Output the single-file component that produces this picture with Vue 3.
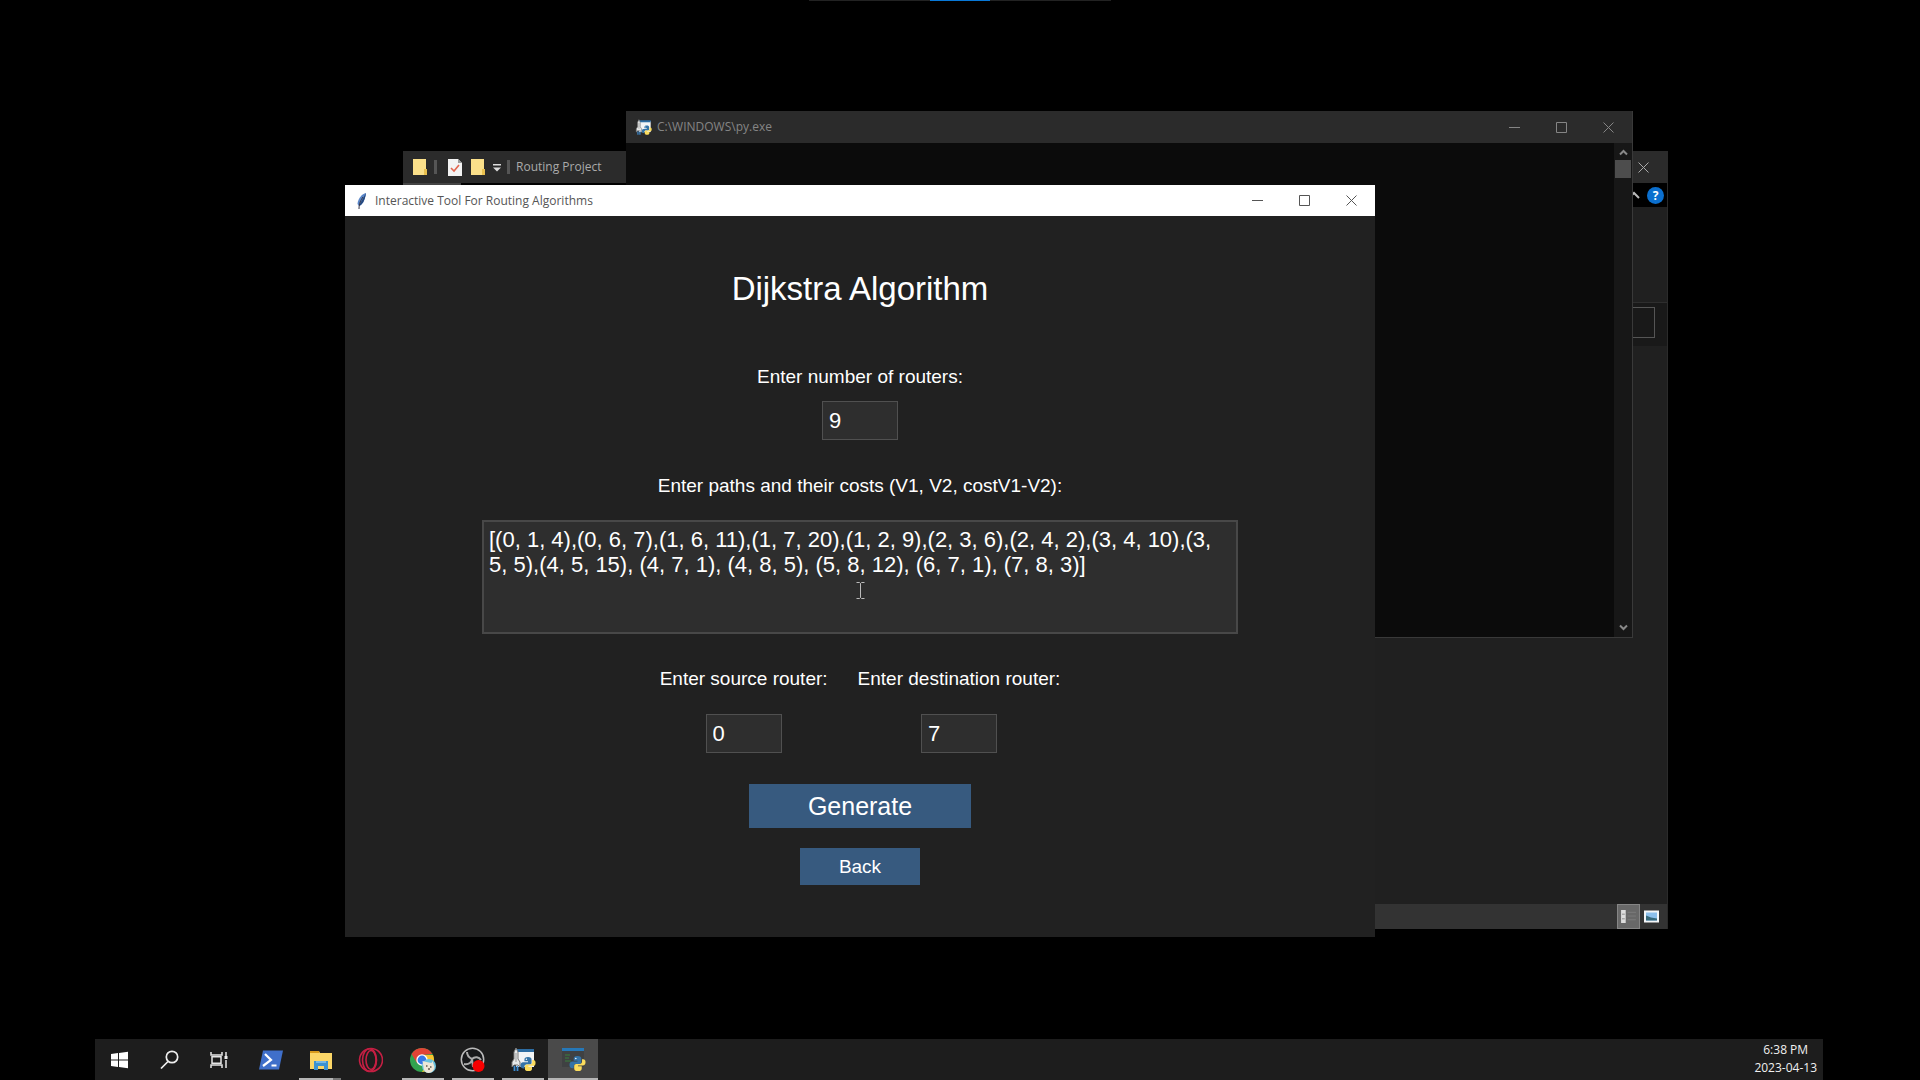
<script setup>
import { ref } from 'vue'

const routers = ref('9')
const paths = ref(
  '[(0, 1, 4),(0, 6, 7),(1, 6, 11),(1, 7, 20),(1, 2, 9),(2, 3, 6),(2, 4, 2),(3, 4, 10),(3, 5, 5),(4, 5, 15), (4, 7, 1), (4, 8, 5), (5, 8, 12), (6, 7, 1), (7, 8, 3)]'
)
const source = ref('0')
const destination = ref('7')

// Taskbar entries, left to right. `open` draws the running indicator.
const tasks = [
  { id: 'start', label: 'Start' },
  { id: 'search', label: 'Search' },
  { id: 'taskview', label: 'Task View' },
  { id: 'powershell', label: 'PowerShell' },
  { id: 'explorer', label: 'File Explorer', open: true },
  { id: 'opera', label: 'Opera' },
  { id: 'chrome', label: 'Chrome', open: true },
  { id: 'obs', label: 'OBS Studio', open: true },
  { id: 'launcher', label: 'Python Launcher', open: true },
  { id: 'python', label: 'Python', open: true, active: true },
]
</script>

<template>
  <div class="desktop">
    <!-- shapes used more than once -->
    <svg class="defs" aria-hidden="true">
      <symbol id="i-min" viewBox="0 0 11 11"><path d="M0 5.5h11" /></symbol>
      <symbol id="i-max" viewBox="0 0 11 11"><path d="M.5.5h10v10H.5z" /></symbol>
      <symbol id="i-close" viewBox="0 0 11 11"><path d="M.5.5l10 10M10.5.5l-10 10" /></symbol>
      <symbol id="i-folder" viewBox="0 0 16 18">
        <path d="M1 1h13v10l1 1v5H1z" fill="#fbe08a" stroke="none" />
        <path d="M12 11h3v6h-3z" fill="#e9c04f" stroke="none" />
      </symbol>
      <symbol id="i-snake" viewBox="0 0 18 18">
        <path d="M9 1C6 1 5 2 5 4v2h4v1H3.500C1.500 7 .5 8.500.5 10.500S1.500 14 3.500 14H5v-2c0-1.500 1-2.500 2.500-2.500h4C12.500 9.500 13 8.500 13 7.500V4c0-2-1-3-4-3z" fill="#3473a7" stroke="none" />
        <path d="M9.500 17c3 0 4-1 4-3v-2h-4v-1H15c2 0 2.500-1.500 2.500-3.500S16.500 4.500 15 4.500h-1.200v2.500c0 1.500-1 2.500-2.300 2.500h-4C6.500 9.500 5.500 10.500 5.500 11.500V14c0 2 1 3 4 3z" fill="#fbdc5c" stroke="none" />
        <circle cx="7.200" cy="3.600" r=".8" fill="#fff" stroke="none" />
      </symbol>
      <symbol id="i-launcher" viewBox="0 0 26 26">
        <path d="M6 3h18v17H6z" fill="#f2f4f6" stroke="none" />
        <path d="M6 2h18v3H6z" fill="#2d6ca2" stroke="none" />
        <path d="M2 20v-5l2-3V5l2-4 2 4v7l2 3v5l-2-2H4z" fill="#e6e8e8" stroke="#777" />
        <path d="M6 6v9" stroke="#999" />
        <path d="M4.500 19v5M7.500 19v5" stroke="#3b8ad0" stroke-width="1.800" />
        <use href="#i-snake" x="10" y="9" width="16" height="16" />
      </symbol>
    </svg>

    <div class="edge-bar"><span></span></div>

    <section class="window explorer" aria-label="Routing Project">
      <header class="titlebar">
        <svg class="folder"><use href="#i-folder" /></svg>
        <span class="divider"></span>
        <svg class="doc" viewBox="0 0 14 17">
          <path d="M0 0h10l4 4v13H0z" fill="#f3f3f3" />
          <path d="M10 0v4h4" fill="#999" />
          <path d="M3 9l3 3 5-6" fill="none" stroke="#e2654f" stroke-width="1.6" />
        </svg>
        <svg class="folder"><use href="#i-folder" /></svg>
        <svg class="drop" viewBox="0 0 8 8"><path d="M0 0h8v1.500H0zM0 3.500h8l-4 4z" fill="#ddd" /></svg>
        <span class="divider"></span>
        <span class="title">Routing Project</span>
        <div class="controls">
          <button type="button" aria-label="Close folder"><svg><use href="#i-close" /></svg></button>
        </div>
      </header>
      <div class="ribbon">
        <span class="file-tab"></span>
        <svg class="collapse" viewBox="0 0 12 8"><path d="M1 7l5-5 5 5" fill="none" stroke="#bbb" stroke-width="2" /></svg>
        <button type="button" class="help" aria-label="Help">?</button>
      </div>
      <div class="ribbon-body"></div>
      <div class="address">
        <input type="text" aria-label="Search folder" />
      </div>
      <div class="files"></div>
      <footer class="status">
        <button type="button" class="view selected" aria-label="Details view">
          <svg viewBox="0 0 16 14"><path d="M0 0h5v14H0z" fill="#ddd" /><path d="M1 4.500h3M1 9.500h3" stroke="#888" /><path d="M7 2.500h9M7 6.500h9M7 10.500h9" stroke="#7c7c7c" /></svg>
        </button>
        <button type="button" class="view" aria-label="Icon view">
          <svg viewBox="0 0 15 12"><path d="M0 0h15v12H0z" fill="#f4f6f8" /><path d="M2 2h11v8H2z" fill="#8dc0ec" /><path d="M2 5l5 2 6 1v2H2z" fill="#37697a" /></svg>
        </button>
      </footer>
    </section>

    <section class="window console" aria-label="py.exe">
      <header class="titlebar">
        <svg class="launcher"><use href="#i-launcher" /></svg>
        <span class="title">C:\WINDOWS\py.exe</span>
        <div class="controls">
          <button type="button" aria-label="Minimize console"><svg><use href="#i-min" /></svg></button>
          <button type="button" aria-label="Maximize console"><svg><use href="#i-max" /></svg></button>
          <button type="button" aria-label="Close console"><svg><use href="#i-close" /></svg></button>
        </div>
      </header>
      <div class="console-body">
        <div class="scrollbar">
          <svg viewBox="0 0 9 7"><path d="M1 5.500L4.500 2 8 5.500" /></svg>
          <span class="thumb"></span>
          <svg viewBox="0 0 9 7"><path d="M1 1.500L4.500 5 8 1.500" /></svg>
        </div>
      </div>
    </section>

    <main class="window tool">
      <header class="titlebar">
        <svg class="feather" viewBox="0 0 12 16">
          <path d="M10 0C6 1 2 5 1.500 11l1.500 2c3-1 6-5 7-13z" fill="#5a86c8" />
          <path d="M10 0C8 4 5 8 3 13c3-1 6-5 7-13z" fill="#27497f" />
          <path d="M7 4c-2 3-4 6-4 12" fill="none" stroke="#334" />
        </svg>
        <span class="title">Interactive Tool For Routing Algorithms</span>
        <div class="controls">
          <button type="button" aria-label="Minimize"><svg><use href="#i-min" /></svg></button>
          <button type="button" aria-label="Maximize"><svg><use href="#i-max" /></svg></button>
          <button type="button" aria-label="Close"><svg><use href="#i-close" /></svg></button>
        </div>
      </header>
      <form class="form" @submit.prevent>
        <h1>Dijkstra Algorithm</h1>
        <label for="routers">Enter number of routers:</label>
        <input id="routers" v-model="routers" class="small-input" type="text" />
        <label class="paths-label" for="paths">Enter paths and their costs (V1, V2, costV1-V2):</label>
        <textarea id="paths" v-model="paths" spellcheck="false"></textarea>
        <div class="endpoints">
          <div class="endpoint">
            <label for="source">Enter source router:</label>
            <input id="source" v-model="source" class="small-input" type="text" />
          </div>
          <div class="endpoint">
            <label for="destination">Enter destination router:</label>
            <input id="destination" v-model="destination" class="small-input" type="text" />
          </div>
        </div>
        <button type="submit" class="generate">Generate</button>
        <button type="button" class="back">Back</button>
      </form>
    </main>

    <!-- text cursor over the paths box -->
    <svg class="cursor" viewBox="0 0 9 17"><path d="M.5.5h3l1 1 1-1h3M4.500 1.500v14M.5 16.500h3l1-1 1 1h3" /></svg>

    <footer class="taskbar">
      <nav class="tasks" aria-label="Taskbar">
        <button
          v-for="task in tasks"
          :key="task.id"
          type="button"
          class="task"
          :class="[`task-${task.id}`, { open: task.open, active: task.active }]"
          :aria-label="task.label"
        >
          <svg viewBox="0 0 26 26">
            <g v-if="task.id === 'start'" fill="#fff">
              <path d="M4 7l7-1v6.500H4zM12 5.900l9-1.200v7.800h-9zM4 13.500h7V20l-7-1zM12 13.500h9v7.800L12 20.100z" />
            </g>
            <g v-else-if="task.id === 'search'" fill="none" stroke="#eee" stroke-width="1.700">
              <circle cx="15" cy="10" r="5.700" />
              <path d="M11 14.500L4 21.500" />
            </g>
            <g v-else-if="task.id === 'taskview'" fill="none" stroke="#e6e6e6" stroke-width="1.500">
              <path d="M4 5v3h11V5M4 21v-3h11v3M5 9.800h9v6.400H5zM19 5v4M19 13v8" />
              <path d="M17.500 9h3v3h-3z" fill="#eee" stroke="none" />
            </g>
            <g v-else-if="task.id === 'powershell'">
              <path d="M6 3.500h20L22 22.500H2z" fill="#3f6fca" />
              <path d="M8 7l6 6-8 6M14.500 18.500h5" fill="none" stroke="#fff" stroke-width="2.200" />
            </g>
            <g v-else-if="task.id === 'explorer'">
              <path d="M3 4h9l1 2h12v16H3z" fill="#fbd667" />
              <path d="M3 4h9v2H3z" fill="#d89b1c" />
              <path d="M7 14h14v9h-4v-4h-6v4H7z" fill="#3c92d0" />
              <path d="M9 14h10v2H9z" fill="#75b8e5" />
            </g>
            <g v-else-if="task.id === 'opera'" fill="none" stroke="#c51f43" stroke-width="1.600">
              <circle cx="14" cy="13" r="11.500" />
              <ellipse cx="12.500" cy="13" rx="7" ry="11.300" />
              <ellipse cx="14" cy="13" rx="5" ry="9.500" />
            </g>
            <g v-else-if="task.id === 'chrome'">
              <circle cx="12" cy="13" r="12" fill="#31a350" />
              <path d="M12 1a12 12 0 0 1 10.400 6L12 8l-5 8L1.600 7A12 12 0 0 1 12 1z" fill="#e24335" />
              <path d="M12 8h11a12 12 0 0 1-11 17l5-9z" fill="#f7c52d" />
              <circle cx="12" cy="13" r="5.700" fill="#fff" />
              <circle cx="12" cy="13" r="4.400" fill="#3978e6" />
              <circle cx="19" cy="19" r="7" fill="#6cc3df" />
              <path d="M12.500 14l4 1 5 1 1-2 2 6c0 3-3 6-6 6s-5-3-5-6z" fill="#eee7d8" />
              <path d="M16 19h1.500M20 20h1.500M18 22h2" stroke="#665a4d" stroke-width="1.400" />
            </g>
            <g v-else-if="task.id === 'obs'">
              <circle cx="12.500" cy="12.500" r="11.200" fill="#17181a" stroke="#bbb" stroke-width="1.500" />
              <path d="M7 5c0 4 3 6 5 7 0 3-3 6-8 5M12 12c3-3 7-2 9 1M12 12l1 8" fill="none" stroke="#aaa" stroke-width="2" />
              <circle cx="18.500" cy="19" r="6" fill="#f80000" />
            </g>
            <use v-else-if="task.id === 'launcher'" href="#i-launcher" />
            <g v-else>
              <path d="M2 2h22v18H2z" fill="#3f4142" />
              <path d="M2 1h22v3H2z" fill="#2678b8" />
              <path d="M5 8h5M5 11h4M5 14h6" stroke="#3d6b3f" stroke-width="1.500" />
              <use href="#i-snake" x="9" y="8" width="17" height="17" />
            </g>
          </svg>
        </button>
      </nav>
      <div class="clock">
        <time>6:38 PM</time>
        <time>2023-04-13</time>
      </div>
    </footer>
  </div>
</template>

<style>
body {
  background: #000;
}
</style>

<style scoped>
* {
  box-sizing: border-box;
}

.desktop {
  position: relative;
  display: flex;
  flex-direction: column;
  align-items: center;
  min-height: 100vh;
  overflow: hidden;
  background: #000;
  font-family: 'Open Sans', 'Noto Sans', sans-serif;
}

button {
  padding: 0;
  border: 0;
  background: none;
  color: inherit;
  font: inherit;
}

.defs {
  position: absolute;
  width: 0;
  height: 0;
}

.edge-bar {
  display: flex;
  justify-content: center;
  width: 302px;
  height: 1px;
  background: #222;
}

.edge-bar span {
  width: 60px;
  background: #0878d7;
}

/* Windows */
.window {
  position: absolute;
  display: flex;
  flex-direction: column;
}

.titlebar {
  display: flex;
  align-items: center;
  flex: none;
  height: 32px;
  background: #2b2b2b;
  color: #858585;
  font-size: 12px;
  line-height: 16px;
}

.controls {
  display: flex;
  align-self: stretch;
  margin-left: auto;
}

.controls button {
  display: flex;
  align-items: center;
  justify-content: center;
  width: 47px;
}

.controls svg {
  width: 11px;
  height: 11px;
  fill: none;
  stroke: currentColor;
}

/* Explorer */
.explorer {
  left: 403px;
  top: 151px;
  width: 1265px;
  height: 778px;
  border-right: 1px solid #2b2b2b;
  background: #202020;
}

.explorer .titlebar {
  padding-left: 9px;
  color: #aaa;
}

.folder {
  width: 16px;
  height: 18px;
}

.divider {
  width: 3px;
  height: 14px;
  margin: 0 6px;
  background: #555;
}

.doc {
  width: 14px;
  height: 17px;
  margin: 0 8px 0 5px;
}

.drop {
  width: 8px;
  height: 8px;
  margin: 2px 0 0 7px;
}

.ribbon {
  display: flex;
  align-items: center;
  gap: 7px;
  height: 24px;
  padding-right: 3px;
  background: #000;
}

.file-tab {
  width: 58px;
  height: 24px;
  margin-right: auto;
  background: #444;
}

.collapse {
  width: 12px;
  height: 8px;
}

.help {
  width: 17px;
  height: 17px;
  border-radius: 50%;
  background: #0b6fce;
  color: #fff;
  font-size: 12px;
  font-weight: 700;
  line-height: 17px;
}

.ribbon-body {
  height: 96px;
  border-bottom: 1px solid #2e2e2e;
}

.address {
  display: flex;
  justify-content: flex-end;
  height: 43px;
  padding: 4px 12px 8px;
  background: #191919;
}

.address input {
  width: 240px;
  border: 1px solid #555;
  background: #191919;
}

.files {
  flex: 1;
}

.status {
  display: flex;
  justify-content: flex-end;
  height: 25px;
  padding-right: 4px;
  background: #333;
}

.view {
  display: flex;
  align-items: center;
  justify-content: center;
  width: 23px;
}

.view svg {
  width: 15px;
  height: 13px;
}

.view.selected {
  border: 1px solid #858585;
  background: #686868;
}

/* Console */
.console {
  left: 626px;
  top: 111px;
  width: 1007px;
  height: 527px;
  border: solid #393939;
  border-width: 0 1px 1px 0;
}

.launcher {
  width: 17px;
  height: 17px;
  margin: 0 5px 0 9px;
}

.console-body {
  display: flex;
  flex: 1;
  justify-content: flex-end;
  background: #0b0b0b;
}

.scrollbar {
  display: flex;
  flex-direction: column;
  align-items: center;
  width: 18px;
  padding: 6px 0;
  background: #171717;
}

.scrollbar svg {
  width: 9px;
  height: 7px;
  fill: none;
  stroke: #888;
  stroke-width: 2;
}

.thumb {
  width: 16px;
  height: 18px;
  margin: 4px 0 auto;
  background: #4d4d4d;
}

/* Routing tool */
.tool {
  left: 345px;
  top: 185px;
  width: 1030px;
  height: 752px;
  background: #212121;
}

.tool .titlebar {
  height: 31px;
  background: #fff;
  color: #555;
}

.feather {
  width: 12px;
  height: 16px;
  margin: 0 7px 0 11px;
}

.form {
  display: flex;
  flex-direction: column;
  align-items: center;
  padding-top: 53px;
  color: #fff;
  font-family: 'Liberation Sans', Arial, sans-serif;
}

h1 {
  margin: 0 0 56px;
  font-size: 33px;
  font-weight: 400;
  line-height: 40px;
}

label {
  font-size: 19px;
  line-height: 24px;
}

.small-input,
textarea {
  border: 1px solid #505050;
  border-radius: 0;
  outline: 0;
  background: #2e2e2e;
  color: #fff;
  font-family: inherit;
  font-size: 22px;
}

.small-input {
  width: 76px;
  height: 39px;
  margin-top: 12px;
  padding: 0 6px;
}

.paths-label {
  margin-top: 34px;
}

textarea {
  width: 756px;
  height: 114px;
  margin: 22px 0 33px;
  padding: 5px;
  border: 2px solid #484848;
  line-height: 25px;
  overflow: hidden;
  resize: none;
}

.endpoints {
  display: flex;
  gap: 30px;
}

.endpoint {
  display: flex;
  flex-direction: column;
  align-items: center;
}

.endpoint .small-input {
  margin-top: 23px;
}

.generate,
.back {
  background: #375a7f;
}

.generate {
  width: 222px;
  height: 44px;
  margin: 31px 0 20px;
  font-size: 25px;
}

.back {
  width: 120px;
  height: 37px;
  font-size: 19px;
}

.cursor {
  position: absolute;
  left: 856px;
  top: 582px;
  width: 9px;
  height: 17px;
  fill: none;
  stroke: #bbb;
}

/* Taskbar */
.taskbar {
  display: flex;
  align-self: stretch;
  justify-content: space-between;
  height: 41px;
  margin: auto 97px 0 95px;
  background: #1d1d1d;
}

.tasks {
  display: flex;
}

.task {
  display: flex;
  align-items: center;
  justify-content: center;
  position: relative;
  width: 50px;
}

.task svg {
  width: 26px;
  height: 26px;
}

.task-chrome {
  margin-left: 3px;
}

.task.open::after {
  content: '';
  position: absolute;
  right: 4px;
  bottom: 0;
  left: 4px;
  height: 2px;
  background: #b5b5b5;
}

.task-explorer.open::after {
  border-right: 8px solid #777;
}

.task.active {
  background: #4a4a4a;
}

.task.active::after {
  right: 0;
  left: 0;
}

.clock {
  display: flex;
  flex-direction: column;
  align-items: center;
  padding: 2px 6px 0;
  color: #f0f0f0;
  font-size: 12px;
  line-height: 18px;
}
</style>
